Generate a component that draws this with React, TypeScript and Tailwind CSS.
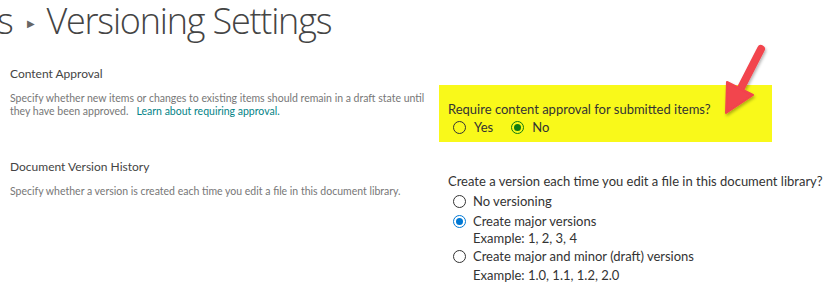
import React from "react";

function Radio({ checked, color }: { checked?: boolean; color: string }) {
  return (
    <span
      className="w-[13px] h-[13px] rounded-full border flex items-center justify-center shrink-0"
      style={{ borderColor: checked ? color : "#333" }}
    >
      {checked && (
        <span className="w-[7px] h-[7px] rounded-full" style={{ backgroundColor: color }} />
      )}
    </span>
  );
}

export default function App() {
  const font = { fontFamily: 'Lato, "Liberation Sans", sans-serif' };

  return (
    <div className="relative w-[834px] h-[296px] bg-white overflow-hidden text-[#333]" style={font}>
      {/* page title */}
      <div
        className="flex items-center h-[42px] -ml-[3px] text-[#444] font-light text-[36px] leading-[42px] tracking-[-1.2px]"
        style={{ fontFamily: '"Open Sans", sans-serif' }}
      >
        <span>s</span>
        <span className="ml-[14px] mr-[13px] mt-[4px] text-[#666] text-[10px] leading-none">▶</span>
        <span>Versioning Settings</span>
      </div>

      <div className="flex mt-[24px]">
        <div className="w-[430px] pl-[10px]">
          <div className="text-[12px] leading-[16px] text-[#444]">Content Approval</div>
          <div className="mt-[10px] text-[10.5px] leading-[13px] text-[#777]">
            Specify whether new items or changes to existing items should remain in a draft state until
            they have been approved.&nbsp;&nbsp;&nbsp;<span className="text-[#038387]">Learn about requiring approval.</span>
          </div>
        </div>
        <div className="ml-[9px] mt-[19px] w-[333px] h-[57px] bg-[#f9f91a] pl-[9px] pt-[15px]">
          <div className="text-[13px] leading-[18px] text-[#333]">Require content approval for submitted items?</div>
          <div className="flex items-center text-[13px] leading-[18px]">
            <span className="ml-[5px]"><Radio color="#107c10" /></span>
            <span className="ml-[8px]">Yes</span>
            <span className="ml-[18px]"><Radio checked color="#107c10" /></span>
            <span className="ml-[8px]">No</span>
          </div>
        </div>
      </div>

      <div className="flex mt-[17px]">
        <div className="w-[430px] pl-[10px]">
          <div className="text-[12px] leading-[16px] text-[#444]">Document Version History</div>
          <div className="mt-[10px] text-[10.5px] leading-[13px] text-[#777]">
            Specify whether a version is created each time you edit a file in this document library.
          </div>
        </div>
        <div className="ml-[18px] mt-[13px] text-[13px] leading-[18px] whitespace-nowrap">
          <div>Create a version each time you edit a file in this document library?</div>
          <div className="mt-[2px] flex items-center gap-[7px] pl-[5px]">
            <Radio color="#0078d4" />
            <span>No versioning</span>
          </div>
          <div className="mt-[2px] flex items-center gap-[7px] pl-[5px]">
            <Radio checked color="#0078d4" />
            <span>Create major versions</span>
          </div>
          <div className="pl-[25px] -mt-[1px]">Example: 1, 2, 3, 4</div>
          <div className="flex items-center gap-[7px] pl-[5px]">
            <Radio color="#0078d4" />
            <span>Create major and minor (draft) versions</span>
          </div>
          <div className="pl-[25px] mt-[1px]">Example: 1.0, 1.1, 1.2, 2.0</div>
        </div>
      </div>

      {/* red annotation arrow */}
      <svg className="absolute left-[715px] top-[40px]" width="60" height="82" viewBox="0 0 60 82">
        <defs>
          <filter id="sh" x="-30%" y="-30%" width="160%" height="160%">
            <feDropShadow dx="1" dy="2" stdDeviation="1.5" floodColor="#000" floodOpacity="0.3" />
          </filter>
        </defs>
        <g filter="url(#sh)" fill="#f2444d" stroke="#f2444d" strokeLinejoin="round">
          <line x1="46" y1="9" x2="26" y2="48" strokeWidth="8" strokeLinecap="round" />
          <polygon points="12,42 38,55 11,73" strokeWidth="2" />
        </g>
      </svg>
    </div>
  );
}
